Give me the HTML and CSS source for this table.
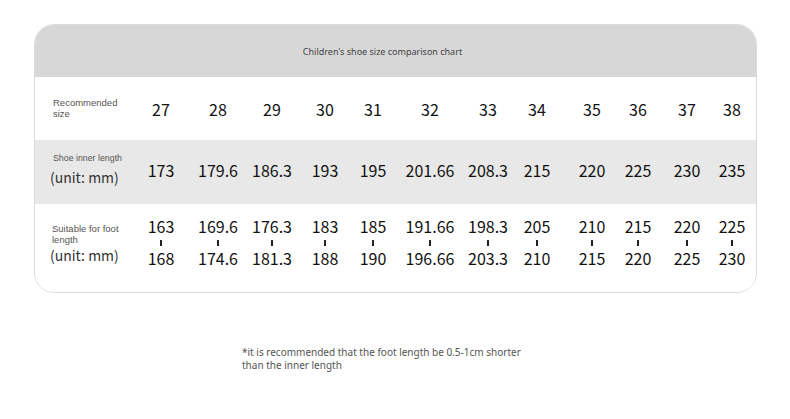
FILE: index.html
```html
<!DOCTYPE html>
<html>
<head>
<meta charset="utf-8">
<link rel="stylesheet" href="styles.css">
</head>
<body>
<div class="page">
  <div class="card">
    <div class="header"><span>Children's shoe size comparison chart</span></div>
    <div class="row row-size">
      <div class="label"><div class="small">Recommended<br>size</div></div>
      <div class="cell">27</div><div class="cell">28</div><div class="cell">29</div><div class="cell">30</div>
      <div class="cell">31</div><div class="cell">32</div><div class="cell">33</div><div class="cell">34</div>
      <div class="cell">35</div><div class="cell">36</div><div class="cell">37</div><div class="cell">38</div>
    </div>
    <div class="row row-inner">
      <div class="label"><div class="small">Shoe inner length</div><div class="unit">(unit: mm)</div></div>
      <div class="cell">173</div><div class="cell">179.6</div><div class="cell">186.3</div><div class="cell">193</div>
      <div class="cell">195</div><div class="cell">201.66</div><div class="cell">208.3</div><div class="cell">215</div>
      <div class="cell">220</div><div class="cell">225</div><div class="cell">230</div><div class="cell">235</div>
    </div>
    <div class="row row-foot">
      <div class="label"><div class="small">Suitable for foot<br>length</div><div class="unit">(unit: mm)</div></div>
      <div class="cell range"><span>163</span><i class="tick"></i><span>168</span></div>
      <div class="cell range"><span>169.6</span><i class="tick"></i><span>174.6</span></div>
      <div class="cell range"><span>176.3</span><i class="tick"></i><span>181.3</span></div>
      <div class="cell range"><span>183</span><i class="tick"></i><span>188</span></div>
      <div class="cell range"><span>185</span><i class="tick"></i><span>190</span></div>
      <div class="cell range"><span>191.66</span><i class="tick"></i><span>196.66</span></div>
      <div class="cell range"><span>198.3</span><i class="tick"></i><span>203.3</span></div>
      <div class="cell range"><span>205</span><i class="tick"></i><span>210</span></div>
      <div class="cell range"><span>210</span><i class="tick"></i><span>215</span></div>
      <div class="cell range"><span>215</span><i class="tick"></i><span>220</span></div>
      <div class="cell range"><span>220</span><i class="tick"></i><span>225</span></div>
      <div class="cell range"><span>225</span><i class="tick"></i><span>230</span></div>
    </div>
  </div>
  <p class="note">*it is recommended that the foot length be 0.5-1cm shorter<br>than the inner length</p>
</div>
</body>
</html>
```
FILE: styles.css
```css
html, body {
  margin: 0;
  padding: 0;
  background: #ffffff;
}
.page {
  width: 790px;
  height: 419px;
  padding: 24px 0 0 34px;
  box-sizing: border-box;
}
.card {
  width: 723px;
  height: 269px;
  box-sizing: border-box;
  border: 1px solid #dcdcdc;
  border-radius: 20px;
  overflow: hidden;
  background: #fff;
  display: flex;
  flex-direction: column;
}
.header {
  height: 52px;
  background: #d7d7d7;
  display: flex;
  align-items: center;
  justify-content: center;
  padding-right: 26px;
  font-family: "Noto Sans", sans-serif;
  font-size: 9px;
  color: #444;
}
.row {
  display: grid;
  grid-template-columns: 100px 52px 62px 46px 60px 36px 78px 38px 60px 50px 42px 56px 34px;
  font-family: "Noto Sans CJK SC", "Noto Sans", sans-serif;
  font-size: 16px;
  color: #111;
}
.row-size { height: 63px; background: #fff; }
.row-inner { height: 64px; background: #e8e8e8; }
.row-foot { flex: 1; background: #fff; }
.label {
  display: flex;
  flex-direction: column;
  justify-content: center;
  padding-left: 18px;
  color: #444;
}
.small {
  font-family: "Liberation Sans", "Noto Sans", sans-serif;
  font-size: 9.5px;
  line-height: 11px;
  color: #555;
}
.unit {
  font-family: "Noto Sans CJK SC", "Noto Sans", sans-serif;
  font-size: 14px;
  line-height: 21px;
  margin-left: -3px;
  color: #333;
}
.row-size .label { padding-bottom: 2px; }
.row-inner .small { margin-bottom: 3px; font-size: 8.8px; }
.row-inner .label { padding-bottom: 3px; }
.row-foot .label {
  justify-content: flex-start;
  padding-top: 19px;
  padding-left: 17px;
}
.row-foot .unit { margin-left: -2px; margin-top: 0; }
.cell {
  display: flex;
  align-items: center;
  justify-content: center;
  white-space: nowrap;
}
.row-inner .cell { padding-bottom: 4px; }
.range {
  flex-direction: column;
  justify-content: flex-start;
  padding-top: 12px;
  line-height: 20px;
}
.tick {
  display: block;
  width: 2px;
  height: 6px;
  background: #222;
  margin: 4px 0 2px;
}
.note {
  margin: 53px 0 0 208px;
  font-family: "Noto Sans", sans-serif;
  font-size: 10px;
  line-height: 13px;
  color: #555;
}
```
